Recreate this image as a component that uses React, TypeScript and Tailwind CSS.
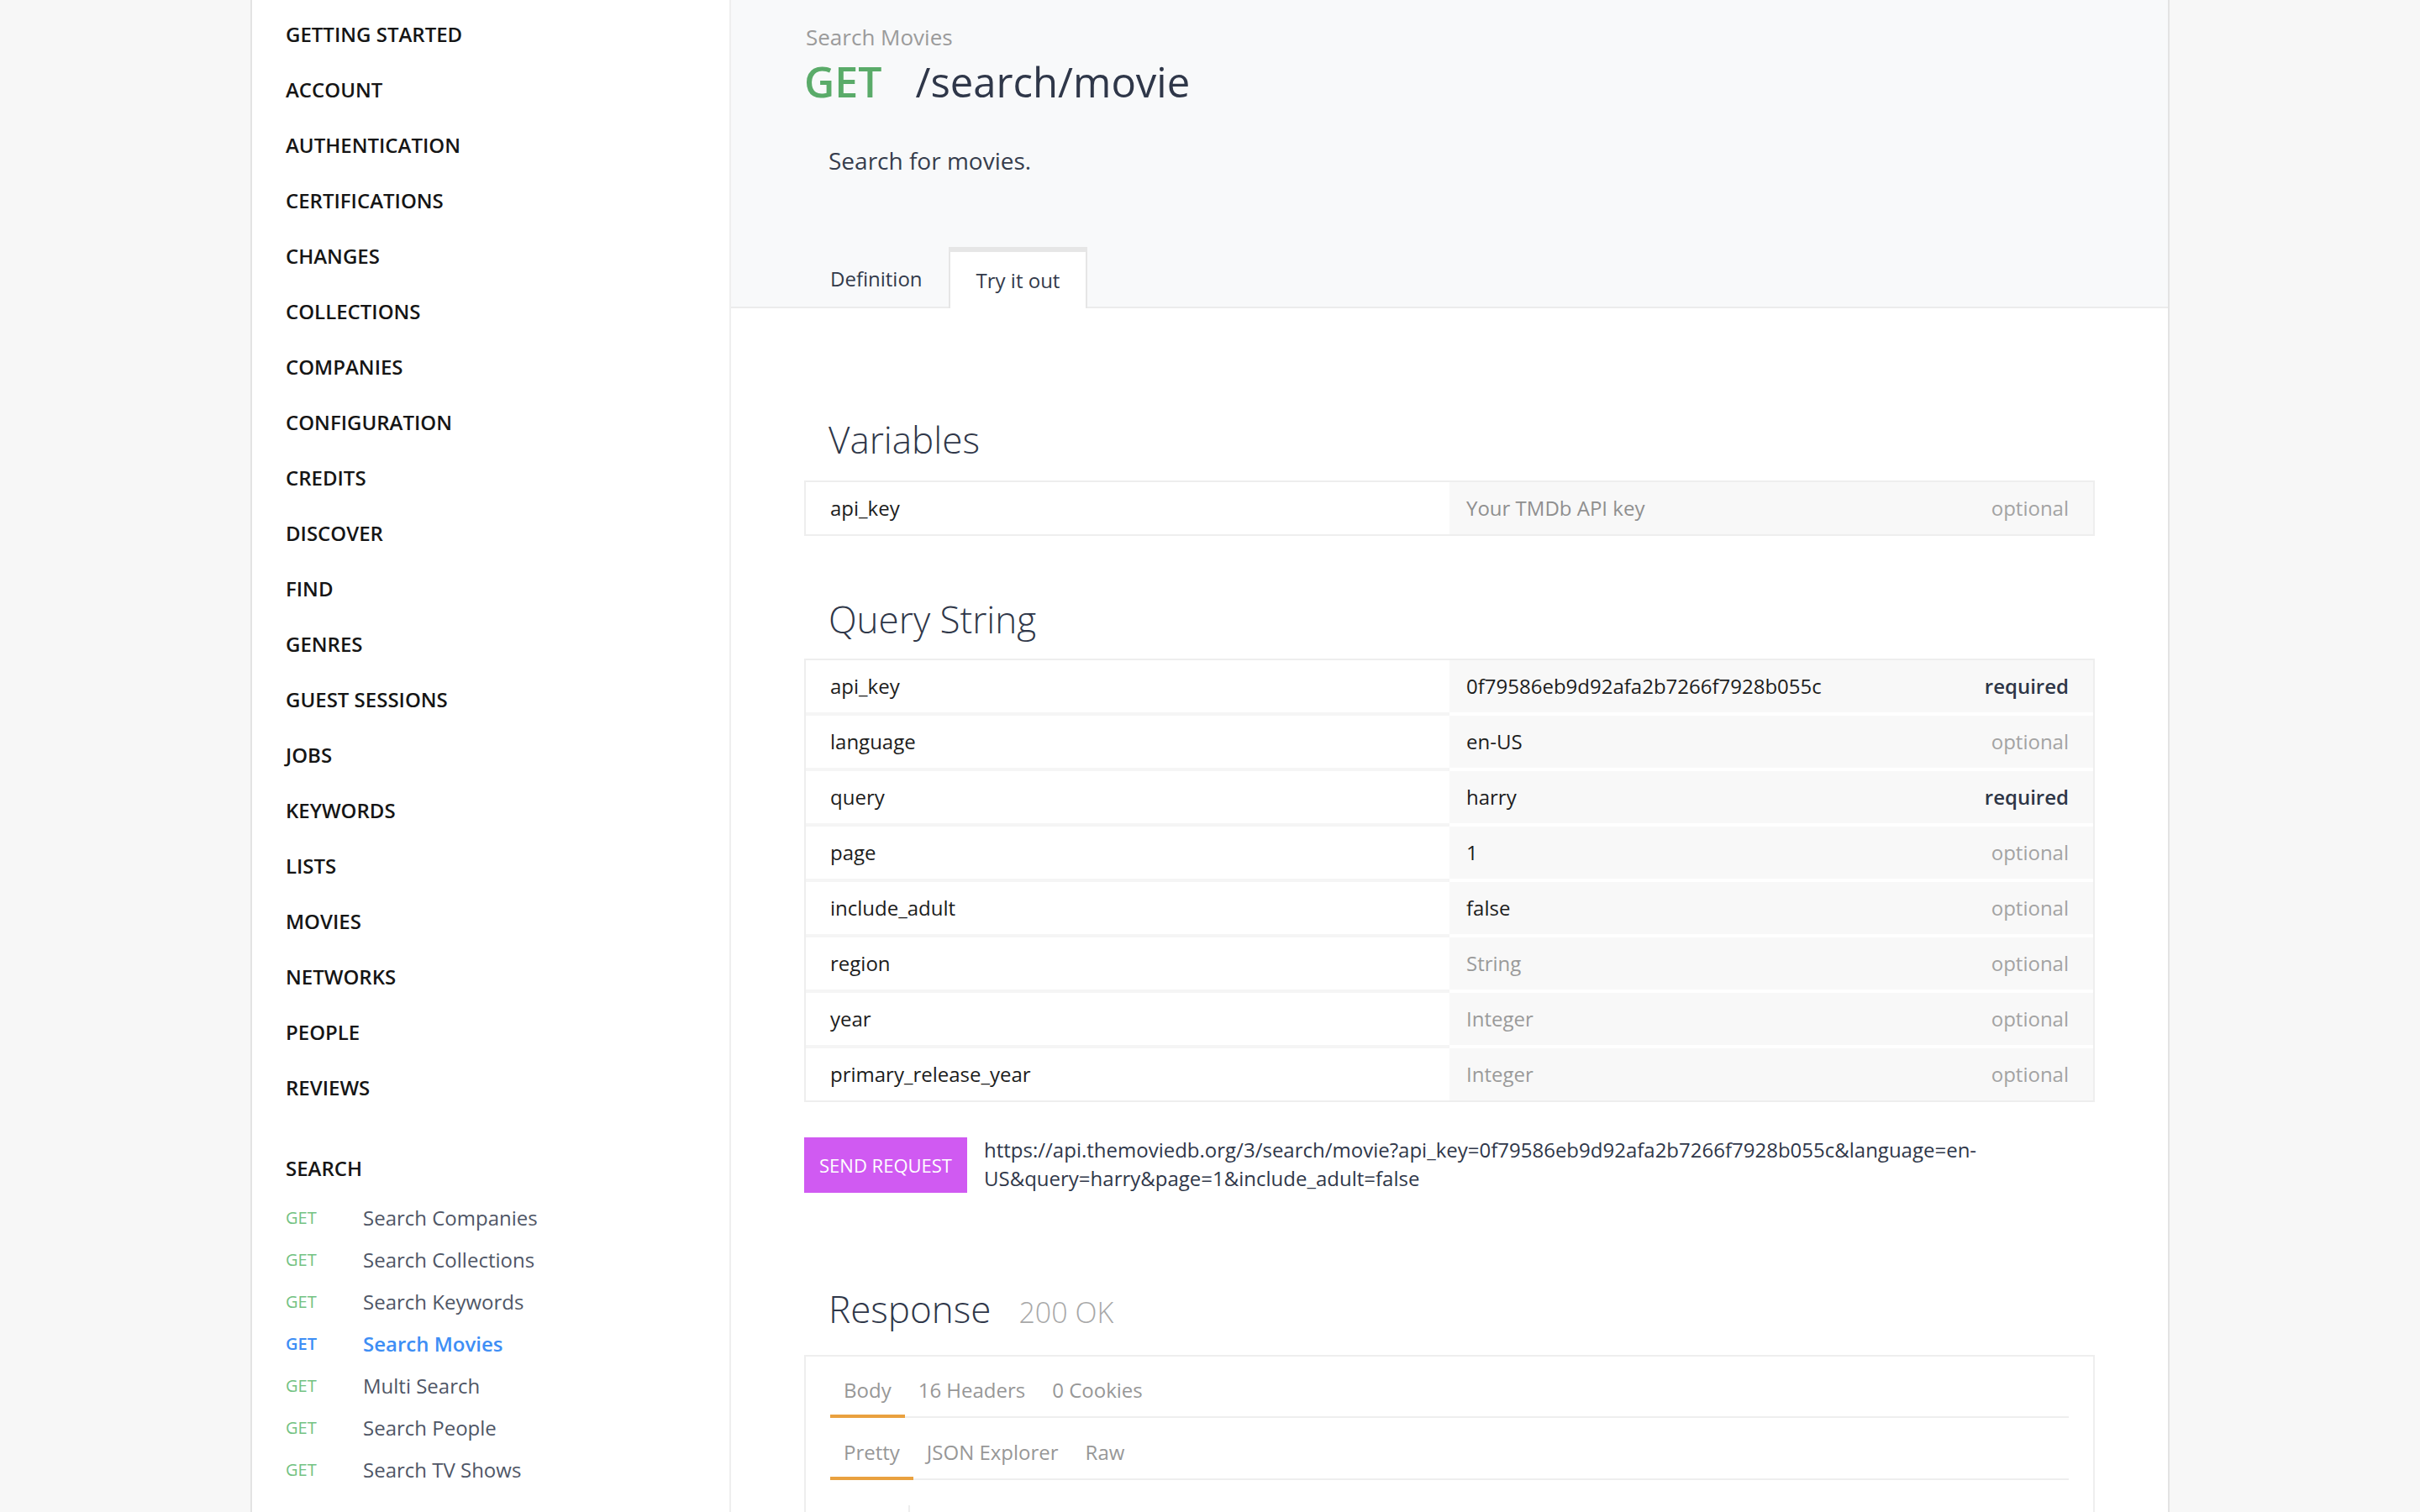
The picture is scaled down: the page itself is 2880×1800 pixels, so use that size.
import React from "react";

const sections = [
	"GETTING STARTED",
	"ACCOUNT",
	"AUTHENTICATION",
	"CERTIFICATIONS",
	"CHANGES",
	"COLLECTIONS",
	"COMPANIES",
	"CONFIGURATION",
	"CREDITS",
	"DISCOVER",
	"FIND",
	"GENRES",
	"GUEST SESSIONS",
	"JOBS",
	"KEYWORDS",
	"LISTS",
	"MOVIES",
	"NETWORKS",
	"PEOPLE",
	"REVIEWS",
];

const searchLinks = [
	{ name: "Search Companies" },
	{ name: "Search Collections" },
	{ name: "Search Keywords" },
	{ name: "Search Movies", active: true },
	{ name: "Multi Search" },
	{ name: "Search People" },
	{ name: "Search TV Shows" },
];

type Param = { name: string; value: string; placeholder?: boolean; required?: boolean };

const queryParams: Param[] = [
	{ name: "api_key", value: "0f79586eb9d92afa2b7266f7928b055c", required: true },
	{ name: "language", value: "en-US" },
	{ name: "query", value: "harry", required: true },
	{ name: "page", value: "1" },
	{ name: "include_adult", value: "false" },
	{ name: "region", value: "String", placeholder: true },
	{ name: "year", value: "Integer", placeholder: true },
	{ name: "primary_release_year", value: "Integer", placeholder: true },
];

function Sidebar() {
	return (
		<aside className="w-[570px] shrink-0 bg-white border-r-2 border-[#efefef] pl-[40px] pt-[8px]">
			{sections.map((s) => (
				<div key={s} className="h-[66px] flex items-center text-[24px] font-semibold text-[#151515]">
					{s}
				</div>
			))}
			<div className="mt-[30px] h-[66px] flex items-center text-[24px] font-semibold text-[#151515]">SEARCH</div>
			<div className="mt-[1px]">
				{searchLinks.map((l) => (
					<div key={l.name} className="h-[50px] flex items-center">
						<span
							className={
								l.active
									? "w-[92px] text-[20px] font-semibold text-[#3d8ef5]"
									: "w-[92px] text-[20px] text-[#72c282]"
							}
						>
							GET
						</span>
						<span
							className={
								l.active
									? "text-[24px] font-semibold text-[#3d8ef5]"
									: "text-[24px] text-[#4f5666]"
							}
						>
							{l.name}
						</span>
					</div>
				))}
			</div>
		</aside>
	);
}

function ParamRow({ p, last }: { p: Param; last: boolean }) {
	return (
		<div className="flex">
			<div
				className={
					last
						? "w-1/2 h-[62px] bg-white pl-[29px] flex items-center text-[24px] text-[#1c1c1c]"
						: "w-1/2 h-[66px] border-b-4 border-[#f5f5f5] bg-white pl-[29px] flex items-center text-[24px] text-[#1c1c1c]"
				}
			>
				{p.name}
			</div>
			<div
				className={
					last
						? "flex-1 h-[62px] bg-[#f8f8f8] pl-[20px] pr-[29px] flex items-center justify-between text-[24px]"
						: "flex-1 h-[66px] border-b-4 border-white bg-[#f8f8f8] pl-[20px] pr-[29px] flex items-center justify-between text-[24px]"
				}
			>
				<span className={p.placeholder ? "text-[#9a9a9a]" : "text-[#1c1c1c]"}>{p.value}</span>
				{p.required ? (
					<span className="font-semibold text-[#2e3647]">required</span>
				) : (
					<span className="text-[#a3a3a3]">optional</span>
				)}
			</div>
		</div>
	);
}

function Content() {
	return (
		<main className="flex-1 flex flex-col bg-white">
			{/* header */}
			<div className="bg-[#f8f9fa]">
				<div className="px-[87px] pt-[26px]">
					<div className="text-[26px] leading-[36px] text-[#9b9b9b] pl-[2px]">Search Movies</div>
					<div className="mt-[5px] flex items-center text-[50px] leading-[60px]">
						<span className="font-semibold text-[#5aab69]">GET</span>
						<span className="ml-[40px] text-[49px] text-[#2f3749]">/search/movie</span>
					</div>
					<p className="mt-[44px] ml-[29px] text-[28px] leading-[40px] text-[#363d4d]">Search for movies.</p>
				</div>
				<div className="mt-[83px] px-[88px] flex items-end border-b-2 border-[#ececec]">
					<div className="h-[67px] pl-[30px] pr-[31px] flex items-center text-[24px] text-[#323a4a]">Definition</div>
					<div className="-mb-[2px] h-[73px] px-[31px] flex items-center bg-white border-t-[6px] border-x-2 border-[#e6e6e6] text-[24px] text-[#323a4a]">
						Try it out
					</div>
				</div>
			</div>

			{/* body */}
			<div className="px-[87px] pt-[126px]">
				<h2 className="pl-[29px] text-[44px] leading-[60px] font-light text-[#2f3749]">Variables</h2>
				<div className="mt-[19px] border-2 border-[#eeeeee]">
					<div className="flex">
						<div className="w-1/2 h-[62px] bg-white pl-[29px] flex items-center text-[24px] text-[#1c1c1c]">api_key</div>
						<div className="flex-1 h-[62px] bg-[#f8f8f8] pl-[20px] pr-[29px] flex items-center justify-between text-[24px]">
							<span className="text-[#8f8f8f]">Your TMDb API key</span>
							<span className="text-[#a3a3a3]">optional</span>
						</div>
					</div>
				</div>

				<h2 className="mt-[69px] pl-[29px] text-[44px] leading-[60px] font-light text-[#2f3749]">Query String</h2>
				<div className="mt-[17px] border-2 border-[#eeeeee]">
					{queryParams.map((p, i) => (
						<ParamRow key={p.name} p={p} last={i === queryParams.length - 1} />
					))}
				</div>

				<div className="mt-[42px] flex items-start gap-[20px]">
					<button className="shrink-0 w-[194px] h-[66px] bg-[#d05af2] text-white text-[22px] uppercase">Send Request</button>
					<p className="-mt-[2px] text-[24px] leading-[34px] text-[#2f3749]">
						https://api.themoviedb.org/3/search/movie?api_key=0f79586eb9d92afa2b7266f7928b055c&amp;language=en-US&amp;query=harry&amp;page=1&amp;include_adult=false
					</p>
				</div>

				<div className="mt-[108px] pl-[29px] flex items-baseline">
					<h2 className="text-[44px] leading-[60px] font-light text-[#2f3749]">Response</h2>
					<span className="ml-[33px] text-[34px] font-light text-[#a8a8a8]">200 OK</span>
				</div>

				<div className="mt-[25px] border-2 border-[#eeeeee] px-[29px] h-[400px]">
					<div className="flex border-b-2 border-[#eeeeee]">
						<div className="-mb-[2px] px-[16px] pt-[26px] pb-[15px] leading-[28px] text-[24px] text-[#979797] border-b-4 border-[#e9a13f]">Body</div>
						<div className="-mb-[2px] px-[16px] pt-[26px] pb-[15px] leading-[28px] text-[24px] text-[#979797] border-b-4 border-transparent">16 Headers</div>
						<div className="-mb-[2px] px-[16px] pt-[26px] pb-[15px] leading-[28px] text-[24px] text-[#979797] border-b-4 border-transparent">0 Cookies</div>
					</div>
					<div className="flex border-b-2 border-[#eeeeee]">
						<div className="-mb-[2px] px-[16px] pt-[27px] pb-[15px] leading-[28px] text-[24px] text-[#979797] border-b-4 border-[#e9a13f]">Pretty</div>
						<div className="-mb-[2px] px-[16px] pt-[27px] pb-[15px] leading-[28px] text-[24px] text-[#979797] border-b-4 border-transparent">JSON Explorer</div>
						<div className="-mb-[2px] px-[16px] pt-[27px] pb-[15px] leading-[28px] text-[24px] text-[#979797] border-b-4 border-transparent">Raw</div>
					</div>
					<div className="mt-[30px] w-[95px] h-[200px] border-r-2 border-[#eeeeee]" />
				</div>
			</div>
		</main>
	);
}

export default function App() {
	return (
		<div className="w-full h-[1800px] overflow-hidden bg-[#f7f7f7] flex justify-center font-['Open_Sans',sans-serif]">
			<div className="w-[2284px] shrink-0 flex border-x-2 border-[#e3e3e3]">
				<Sidebar />
				<Content />
			</div>
		</div>
	);
}
